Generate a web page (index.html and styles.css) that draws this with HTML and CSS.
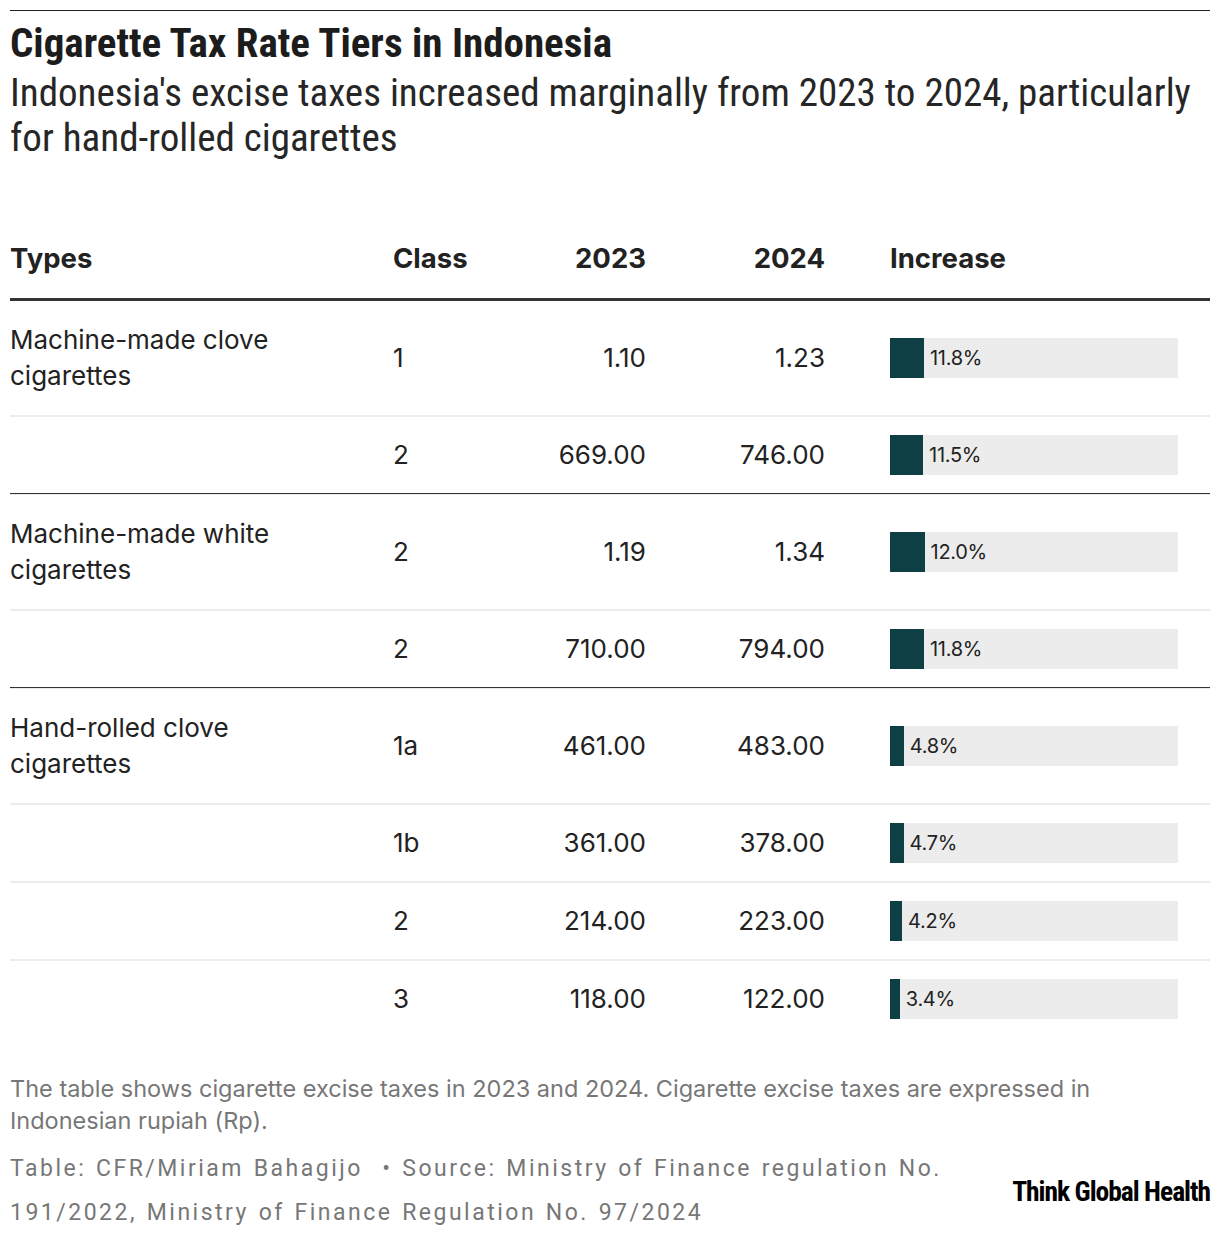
FILE: index.html
```html
<!DOCTYPE html>
<html lang="en">
<head>
<meta charset="utf-8">
<title>Cigarette Tax Rate Tiers in Indonesia</title>
<link rel="stylesheet" href="styles.css">
</head>
<body>
<div class="wrap">
  <header class="head">
    <h1 class="title">Cigarette Tax Rate Tiers in Indonesia</h1>
    <p class="subtitle">Indonesia's excise taxes increased marginally from 2023 to 2024, particularly for hand-rolled cigarettes</p>
  </header>

  <div class="table">
    <div class="row hdr">
      <div class="c-type">Types</div>
      <div class="c-class">Class</div>
      <div class="c-num">2023</div>
      <div class="c-num">2024</div>
      <div class="c-inc">Increase</div>
    </div>

    <div class="group">
      <div class="row">
        <div class="c-type">Machine-made clove cigarettes</div>
        <div class="c-class">1</div>
        <div class="c-num">1.10</div>
        <div class="c-num">1.23</div>
        <div class="c-inc"><div class="bar"><div class="fill" style="width:11.8%"></div><span class="lbl">11.8%</span></div></div>
      </div>
      <div class="row">
        <div class="c-type"></div>
        <div class="c-class">2</div>
        <div class="c-num">669.00</div>
        <div class="c-num">746.00</div>
        <div class="c-inc"><div class="bar"><div class="fill" style="width:11.5%"></div><span class="lbl">11.5%</span></div></div>
      </div>
    </div>

    <div class="group">
      <div class="row">
        <div class="c-type">Machine-made white cigarettes</div>
        <div class="c-class">2</div>
        <div class="c-num">1.19</div>
        <div class="c-num">1.34</div>
        <div class="c-inc"><div class="bar"><div class="fill" style="width:12%"></div><span class="lbl">12.0%</span></div></div>
      </div>
      <div class="row">
        <div class="c-type"></div>
        <div class="c-class">2</div>
        <div class="c-num">710.00</div>
        <div class="c-num">794.00</div>
        <div class="c-inc"><div class="bar"><div class="fill" style="width:11.8%"></div><span class="lbl">11.8%</span></div></div>
      </div>
    </div>

    <div class="group">
      <div class="row">
        <div class="c-type">Hand-rolled clove cigarettes</div>
        <div class="c-class">1a</div>
        <div class="c-num">461.00</div>
        <div class="c-num">483.00</div>
        <div class="c-inc"><div class="bar"><div class="fill" style="width:4.8%"></div><span class="lbl">4.8%</span></div></div>
      </div>
      <div class="row">
        <div class="c-type"></div>
        <div class="c-class">1b</div>
        <div class="c-num">361.00</div>
        <div class="c-num">378.00</div>
        <div class="c-inc"><div class="bar"><div class="fill" style="width:4.7%"></div><span class="lbl">4.7%</span></div></div>
      </div>
      <div class="row">
        <div class="c-type"></div>
        <div class="c-class">2</div>
        <div class="c-num">214.00</div>
        <div class="c-num">223.00</div>
        <div class="c-inc"><div class="bar"><div class="fill" style="width:4.2%"></div><span class="lbl">4.2%</span></div></div>
      </div>
      <div class="row">
        <div class="c-type"></div>
        <div class="c-class">3</div>
        <div class="c-num">118.00</div>
        <div class="c-num">122.00</div>
        <div class="c-inc"><div class="bar"><div class="fill" style="width:3.4%"></div><span class="lbl">3.4%</span></div></div>
      </div>
    </div>
  </div>

  <footer class="foot">
    <p class="note">The table shows cigarette excise taxes in 2023 and 2024. Cigarette excise taxes are expressed in Indonesian rupiah (Rp).</p>
    <div class="credits">
      <p class="source">Table: CFR/Miriam Bahagijo&nbsp; • Source: Ministry of Finance regulation No. 191/2022, Ministry of Finance Regulation No. 97/2024</p>
      <div class="logo">Think Global Health</div>
    </div>
  </footer>
</div>
</body>
</html>
```
FILE: styles.css
```css
html, body {
  margin: 0;
  padding: 0;
  background: #fff;
}

.wrap {
  padding: 10px 10px 0;
  color: #222;
  font-family: "Inter", "Noto Sans", sans-serif;
}

.head {
  border-top: 1px solid #222;
}

.title {
  margin: 9px 0 0;
  font-family: "Roboto Condensed", "Roboto", sans-serif;
  font-stretch: 75%;
  font-weight: 700;
  font-size: 41px;
  line-height: 46px;
  color: #1c1c1c;
}

.subtitle {
  margin: 5px 0 0;
  font-family: "Roboto Condensed", "Roboto", sans-serif;
  font-stretch: 75%;
  font-weight: 400;
  font-size: 39px;
  line-height: 45px;
  color: #262626;
}

.table {
  margin-top: 76px;
}

.row {
  display: grid;
  grid-template-columns: 383px 110px 143px 179px 1fr;
  align-items: center;
  padding: 18px 0;
  font-size: 26px;
  line-height: 36px;
}

.hdr {
  padding: 0 0 19px;
  font-size: 27.5px;
  font-weight: 700;
  border-bottom: 3px solid #333;
}

.c-type {
  padding: 3px 60px 3px 0;
}

.c-num {
  text-align: right;
}

.c-inc {
  padding-left: 65px;
}

.group + .group {
  border-top: 1px solid #333;
}

.group + .group .row:first-child {
  border-top: 1px solid #eaeaea;
}

.row + .row {
  border-top: 2px solid #ececec;
}

.bar {
  display: flex;
  align-items: center;
  width: 288px;
  height: 40px;
  background: #ececec;
}

.fill {
  height: 100%;
  background: #0d3f44;
}

.lbl {
  margin-left: 6px;
  font-size: 20px;
  line-height: 24px;
  letter-spacing: -0.3px;
  color: #222;
}

.foot {
  margin-top: 36px;
}

.note {
  max-width: 1120px;
  margin: 0;
  font-size: 23.5px;
  line-height: 32px;
  color: #777;
}

.credits {
  display: flex;
  align-items: center;
  margin-top: 10px;
}

.source {
  width: 990px;
  margin: 0;
  font-family: "Roboto", sans-serif;
  font-size: 23px;
  line-height: 44px;
  letter-spacing: 2.5px;
  word-spacing: 1.5px;
  color: #777;
}

.logo {
  margin-left: auto;
  font-family: "Roboto Condensed", "Roboto", sans-serif;
  font-stretch: 75%;
  font-weight: 700;
  font-size: 27.5px;
  letter-spacing: -1px;
  color: #000;
  white-space: nowrap;
}
```
